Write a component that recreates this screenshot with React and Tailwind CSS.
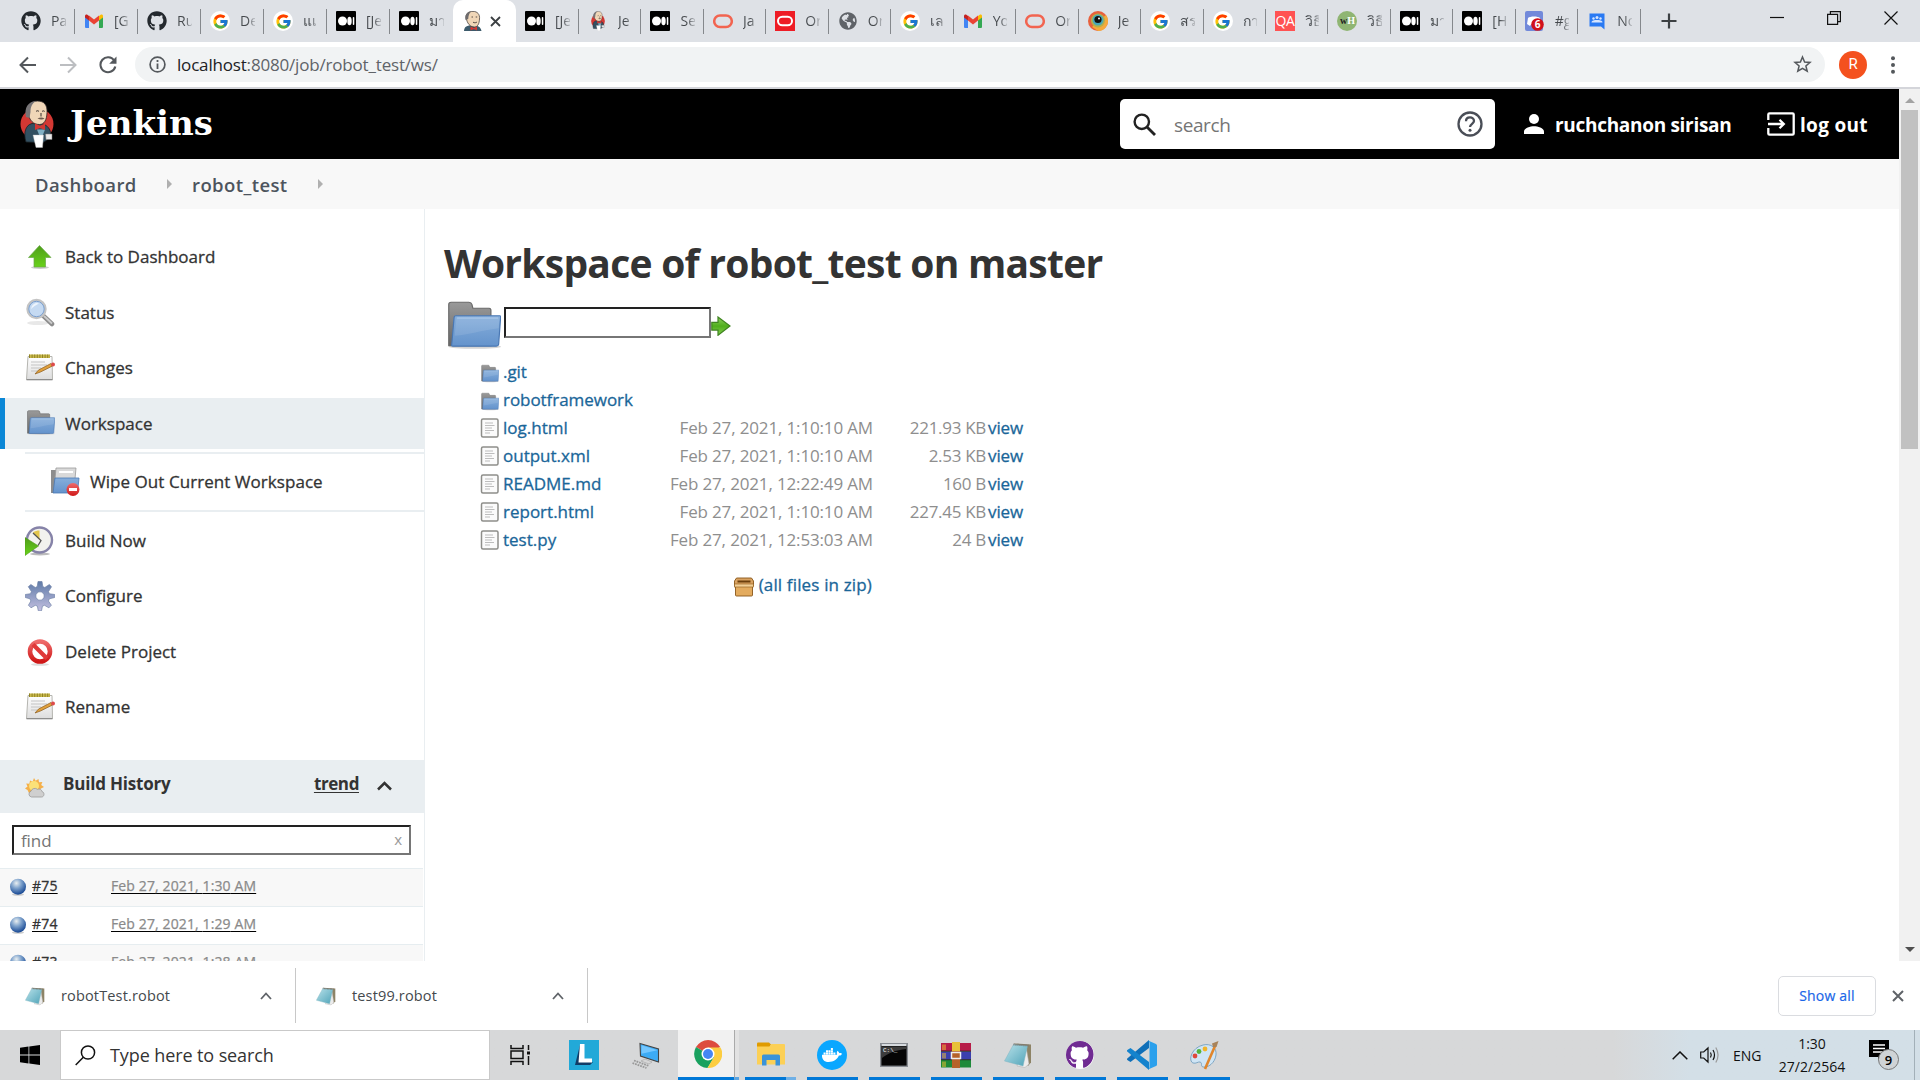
import React from 'react';
import { FaGithub, FaDocker, FaGlobeAmericas } from 'react-icons/fa';
import { FcGoogle } from 'react-icons/fc';

/* ---------- favicons ---------- */
const Github = () => <FaGithub className="size-5 text-[#24292e]" />;
const Google = () => (
  <span className="flex size-5 items-center justify-center rounded-full bg-white"><FcGoogle className="size-[17px]" /></span>
);
const Gmail = () => (
  <svg className="size-5" viewBox="0 0 20 20">
    <path d="M1 4.500V16a1 1 0 0 0 1 1h3V9z" fill="#4285f4" />
    <path d="M19 4.500V16a1 1 0 0 1-1 1h-3V9z" fill="#34a853" />
    <path d="M15 5l1.700-1.300C17.800 3 19 3.700 19 5v1.600L15 9.500z" fill="#fbbc04" />
    <path d="M5 9.500V4.500l5 3.900 5-3.900v5L10 13.400z" fill="#ea4335" />
    <path d="M1 6.600V5c0-1.300 1.300-2 2.400-1.300L5 5v4.500z" fill="#c5221f" />
  </svg>
);
const Medium = () => (
  <svg className="size-5" viewBox="0 0 20 20">
    <rect width="20" height="20" rx="1" fill="#000" />
    <circle cx="6.500" cy="10" r="4.500" fill="#fff" />
    <ellipse cx="13.500" cy="10" rx="2.200" ry="4.300" fill="#fff" />
    <rect x="16.800" y="6" width="1.500" height="8" rx=".7" fill="#fff" />
  </svg>
);
const Oracle = () => (
  <svg className="size-5" viewBox="0 0 20 20"><rect x="1.200" y="4.500" width="17.600" height="11.600" rx="5.800" fill="none" stroke="#f26450" strokeWidth="2.500" /></svg>
);
const OracleRed = () => (
  <svg className="size-5" viewBox="0 0 20 20"><rect width="20" height="20" fill="#ee1c25" /><rect x="3" y="5.700" width="14" height="8.600" rx="4.300" fill="none" stroke="#fff" strokeWidth="2" /></svg>
);
const Globe = () => <FaGlobeAmericas className="size-[18px] text-[#5f6368]" />;
const Eye = () => (
  <svg className="size-5" viewBox="0 0 20 20">
    <circle cx="10" cy="10" r="10" fill="#e8603c" /><path d="M10 20a10 10 0 0 0 8-16L4 16z" fill="#f6a93b" />
    <circle cx="10" cy="9.500" r="7" fill="#b5b04a" /><circle cx="10" cy="9" r="5.500" fill="#4aa8b8" />
    <circle cx="10" cy="8.500" r="3.600" fill="#111" /><circle cx="11" cy="7.500" r="1" fill="#fff" />
  </svg>
);
const QA = () => (
  <span className="flex size-5 items-center justify-center bg-[#ff5252] text-[14px] leading-none tracking-[-0.5px] text-white">QA</span>
);
const WH = () => (
  <span className="flex size-5 items-center justify-center rounded-full bg-[#8fb573] font-['Liberation_Serif',serif] text-[10px] font-bold leading-none text-[#222]">w<span className="text-white">H</span></span>
);
const Discord = () => (
  <svg className="size-5 overflow-visible" viewBox="0 0 20 20">
    <rect width="18" height="20" rx="2" fill="#7289da" />
    <path d="M3 7c2-2 10-2 12 0l1 6-3 2-1-1.500H6L5 15l-3-2z" fill="#fff" />
    <circle cx="12.500" cy="13.500" r="6.300" fill="#d1101a" />
    <text x="12.500" y="17" fontSize="10" fontWeight="700" fill="#fff" textAnchor="middle" fontFamily="Open Sans, sans-serif">6</text>
  </svg>
);
const Groups = () => (
  <svg className="size-5" viewBox="0 0 20 20">
    <path d="M2.500 2.500h15v16l-3.500-3H2.500z" fill="#2a7af3" />
    <g fill="#d6e5ff"><circle cx="10" cy="6.500" r="1.500" /><circle cx="6.500" cy="7.500" r="1.200" /><circle cx="13.500" cy="7.500" r="1.200" /><path d="M4.500 11.500c0-2 3-2.500 5.500-2.500s5.500.5 5.500 2.500z" /></g>
  </svg>
);

function JenkinsHead({ className }) {
  return (
    <svg className={className} viewBox="0 0 18 20">
      <path d="M0 20c0-3 1.500-5 5-5.500h7c3 .5 5 2.500 5.500 5.500z" fill="#3c5a6b" />
      <path d="M2 6C2 2 5 .4 9 .4c4.500 0 7 3 6.500 7.600-.2 5-2 8-5 8C6 16 3 12.500 2 6z" fill="#f0d6b7" stroke="#332c2a" strokeWidth=".7" />
      <path d="M1.500 9C.5 4 3 .7 7.500.4 5 2 4.500 4 4.200 8z" fill="#6d6b6d" />
      <path d="M7.500 6h1.500M11.700 6h1.500M9 11.200c1.500.9 3 .6 4-.2" stroke="#332c2a" strokeWidth=".8" fill="none" />
      <path d="M6.500 15.500l3.200 1.500 3.300-1.500v4l-3.300-1.500-3.200 1.500z" fill="#d33833" />
    </svg>
  );
}

function Butler({ className }) {
  return (
    <svg className={className} viewBox="0 0 34 48">
      <ellipse cx="17" cy="24" rx="16.500" ry="16" fill="#d33833" />
      <path d="M6 42C3 32 6 25 12 23.500l12 1c5 2 7 6 7 13l-8 5z" fill="#335061" stroke="#1b2226" strokeWidth=".8" />
      <path d="M7.500 12C7 4.500 11 1 17.500 1c7 0 10 4.500 9.500 11.500-.2 7-2.500 12-7.500 12-6 0-10-3.500-12-12.500z" fill="#f0d6b7" stroke="#2b2525" strokeWidth=".8" />
      <path d="M6 17C4 8 8 1.500 16 1c-4 2.500-5.500 6-5.500 11L9.500 18z" fill="#777476" />
      <path d="M16 11.500c1-1 2-1 3 0M22 11.500c1-.8 2-.8 2.700 0M21 13v3.500" stroke="#332c2a" strokeWidth="1" fill="none" />
      <path d="M17.500 18.500c2.500-1.500 5-1.500 7 0-1.600 1.200-4 1.500-7 0z" fill="#6d5a50" />
      <path d="M17 29.500h8l-2.500 6.500h-3z" fill="#81b0c4" />
      <path d="M15 23.500l5 2.300 5-2.300v6.500l-5-2-5 2z" fill="#d33833" />
      <path d="M13 35h10.500l-1 12.500h-6.500z" fill="#fff" stroke="#bbb" strokeWidth=".4" />
      <path d="M25.500 34h6.500v5.500h-6z" fill="#e8e8e8" stroke="#777" strokeWidth=".5" />
    </svg>
  );
}

/* ---------- page icons ---------- */
function Defs() {
  return (
    <svg className="absolute size-0">
      <defs>
        <linearGradient id="gBlue" x2="0" y2="1"><stop stopColor="#86aedb" /><stop offset="1" stopColor="#6493cc" /></linearGradient>
        <linearGradient id="gGray" x2="0" y2="1"><stop stopColor="#9a9a9a" /><stop offset="1" stopColor="#666" /></linearGradient>
        <linearGradient id="gGreen" x2="0" y2="1"><stop stopColor="#4f9d1b" /><stop offset="1" stopColor="#68d21a" /></linearGradient>
        <linearGradient id="gGo" x2="0" y2="1"><stop stopColor="#8fd05f" /><stop offset=".5" stopColor="#4fae1c" /><stop offset="1" stopColor="#86cf50" /></linearGradient>
        <linearGradient id="gPaper" x2="0" y2="1"><stop stopColor="#fff" /><stop offset="1" stopColor="#ddd" /></linearGradient>
        <linearGradient id="gRed" x2="0" y2="1"><stop stopColor="#ee6b6b" /><stop offset="1" stopColor="#d01818" /></linearGradient>
        <linearGradient id="gGear" x2="0" y2="1"><stop stopColor="#5f7ba8" /><stop offset="1" stopColor="#c3bfe0" /></linearGradient>
        <linearGradient id="gPad" x1="0" x2="1" y2="1"><stop stopColor="#b9e2ea" /><stop offset="1" stopColor="#4fa3b8" /></linearGradient>
        <radialGradient id="gBall" cx=".4" cy=".28" r=".7"><stop stopColor="#e8eef0" /><stop offset=".45" stopColor="#7ea2cc" /><stop offset="1" stopColor="#1c4c96" /></radialGradient>
      </defs>
    </svg>
  );
}
const UpArrow = () => (
  <svg className="-mt-[2px] size-[30px]" viewBox="0 0 30 30">
    <ellipse cx="15" cy="26.500" rx="9" ry="1.500" fill="#ccc" />
    <path d="M14.500 4.500L26 16.500h-5.500v9.500H9v-9.500H3.500z" fill="url(#gGreen)" stroke="#6aa84a" strokeWidth=".7" />
  </svg>
);
const Magnifier = () => (
  <svg className="size-[30px]" viewBox="0 0 30 30">
    <ellipse cx="13" cy="25" rx="11" ry="2" fill="#e8e8e8" />
    <path d="M18 17.500l9 8.500" stroke="#8c8c8c" strokeWidth="4.500" strokeLinecap="round" /><path d="M19 18l8 7.500" stroke="#ccc" strokeWidth="1.800" />
    <circle cx="11.500" cy="11" r="9" fill="#c5daf2" stroke="#c4c4c4" strokeWidth="2.400" /><circle cx="11.500" cy="11" r="7.700" fill="none" stroke="#7ba0d0" />
    <path d="M6 11a6 6 0 0 1 8-5.500C11 7 8 9 6 11z" fill="#eef5fd" />
  </svg>
);
const Notepad = () => (
  <svg className="size-[30px]" viewBox="0 0 30 30">
    <path d="M3 3.500h24l.5 23H1.500z" fill="url(#gPaper)" stroke="#b5b5b0" />
    <path d="M1.500 26.700h26" stroke="#888" strokeWidth="1.200" />
    <path d="M4 1.500h21v3.500H4z" fill="#c9b94c" /><path d="M4 3.200h21" stroke="#8f8226" strokeWidth="3.500" strokeDasharray="1 1.600" />
    <path d="M6 9h14M6 12h16M6 15h10M6 18h6" stroke="#c4c4c4" strokeWidth="1.200" />
    <path d="M10 21l3.500-4L26 10.500l1.500 2.500-12 6z" fill="#e0a03c" stroke="#8a5a1c" strokeWidth=".7" /><circle cx="28" cy="11.500" r="2" fill="#dd4b4b" />
  </svg>
);
function Folder({ className }) {
  return (
    <svg className={className} viewBox="0 0 48 48" preserveAspectRatio="none">
      <ellipse cx="26" cy="44" rx="22" ry="2" fill="#d4d4d4" />
      <path d="M4 43V5q0-2 2-2h15q2 0 2.500 2l.8 3.500H38q1.500 0 1.500 2V43z" fill="url(#gGray)" stroke="#6a6a6a" />
      <path d="M10 15.500h37q.8 0 .7 1L46 42q-.2 1.500-2 1.500H7.500q-1.500 0-1-1.500L8.500 17q.2-1.500 1.500-1.500z" fill="url(#gBlue)" stroke="#4a78b4" />
      <path d="M11 17.500h34.500" stroke="#a9c7ea" strokeWidth="1" fill="none" /><path d="M9 34c12-1 22-5 37-7l.8-10H10.500z" fill="#fff" opacity=".1" />
    </svg>
  );
}
const WipeFolder = () => (
  <svg className="size-[30px]" viewBox="0 0 30 30">
    <path d="M1 26V3h6l1 2h17v21z" fill="#8d8d8d" /><path d="M6 1h20l-1 11H5z" fill="#d9d9d9" stroke="#999" strokeWidth=".8" /><path d="M9 5h14" stroke="#fff" strokeWidth="2" />
    <path d="M5 11h24l-1.500 15H3z" fill="url(#gBlue)" stroke="#4a78b4" strokeWidth=".8" />
    <circle cx="23" cy="22.500" r="6.500" fill="url(#gRed)" /><rect x="19" y="21" width="8" height="3" fill="#fff" />
  </svg>
);
const BuildNow = () => (
  <svg className="size-[30px]" viewBox="0 0 30 30">
    <ellipse cx="15" cy="28" rx="10" ry="1.500" fill="#bbb" />
    <circle cx="14.500" cy="14" r="12.500" fill="#f2f2ee" stroke="#8683a8" strokeWidth="2.400" />
    <path d="M14.500 14L8 6.500c2-1.500 4-2 6.500-2z" fill="#e3c64c" /><path d="M8 7l8 7.500-3 5" stroke="#555" strokeWidth="1.300" fill="none" />
    <path d="M0 11.500L13.500 20 0 29.500z" fill="url(#gGreen)" stroke="#4d9a1a" strokeWidth=".6" />
  </svg>
);
const Gear = () => (
  <svg className="size-[30px]" viewBox="0 0 30 30">
    <path fill="url(#gGear)" stroke="#7083a8" strokeWidth=".7" fillRule="evenodd" d="M13 .5h4l.8 5.100 2 .9 4.500-3 2.200 2.200-3 4.800.8 2.200 5.400.8v3l-5.400 1.300-.9 2.200 3 4.200-2.500 2.600-4.400-2.500-2.100.9-.9 4.600h-3.200l-.9-4.600-2.100-.9-4.300 2.500-2.600-2.600 2.500-4.200-.9-2.200L.3 16.500v-3l5.200-.8.9-2.200-3.100-4.800 2.600-2.200 4.400 3 1.900-.9zM15 10.800a4.200 4.200 0 1 0 0 8.400 4.200 4.200 0 0 0 0-8.400z" />
  </svg>
);
const NoEntry = () => (
  <svg className="size-[30px]" viewBox="0 0 30 30">
    <ellipse cx="15" cy="27.500" rx="9" ry="1.300" fill="#ddd" />
    <circle cx="15" cy="14.500" r="10" fill="#fff" stroke="url(#gRed)" strokeWidth="4.600" /><path d="M8 7.500l14 14" stroke="#e03a3a" strokeWidth="4.200" />
  </svg>
);
const Weather = () => (
  <svg className="size-5" viewBox="0 0 20 20">
    <path d="M9 0l1.600 2.800L13.500 1l.5 3.200 3.400-.2-1.200 3L19 9l-3 1.500L12 15H4L2.500 12 0 10.500 2.500 8.500 1.200 5.500l3.200.2L5 2.500l2.600 1.200z" fill="#f5b04a" />
    <circle cx="9" cy="8" r="5" fill="#fbe178" />
    <path d="M6.500 19a3 3 0 0 1-.5-5.800 4 4 0 0 1 6.500-1.800 3 3 0 0 1 4.500 2.200c2.800.5 2.600 5.400-.5 5.400z" fill="#cfcfcf" stroke="#9a9a9a" strokeWidth=".8" />
  </svg>
);
const FileIcon = () => (
  <svg className="size-5 shrink-0" viewBox="0 0 20 20">
    <rect x="1.500" y="1" width="16.500" height="18" rx="1.500" fill="#fbfbfb" stroke="#8e8e8a" strokeWidth="1.500" />
    <path d="M5 5h8M5 7.500h9.500M5 10h7M5 12.500h9M5 15h5" stroke="#bdbdbd" />
  </svg>
);
const ZipIcon = () => (
  <svg className="size-5" viewBox="0 0 20 20">
    <path d="M2.500 1h15l2 3v5H.5V4z" fill="#d9a261" stroke="#8a5718" strokeWidth=".9" /><rect x="1.500" y="9" width="17" height="10" rx="1" fill="#e3ab5e" stroke="#8a5718" strokeWidth=".9" />
    <rect x="3.500" y="3.500" width="13" height="2" fill="#6b3f0c" /><rect x=".5" y="7" width="19" height="3" fill="#f3cf95" stroke="#8a5718" strokeWidth=".6" />
  </svg>
);
const Ball = () => (
  <svg className="size-5" viewBox="0 0 20 20"><ellipse cx="10" cy="17.500" rx="6" ry="1.300" fill="#ccc" /><circle cx="10" cy="9.700" r="8" fill="url(#gBall)" /></svg>
);
function NotepadFile({ className }) {
  return (
    <svg className={className} viewBox="0 0 28 26">
      <path d="M10 1.500l17 1v18l-3 3.500z" fill="#8d8366" />
      <path d="M22 4l3 18-4 3.500L13 24z" fill="#ececec" stroke="#aaa" strokeWidth=".5" />
      <path d="M9.500 2.500L23.500 4l-4.500 20L.5 19z" fill="url(#gPad)" stroke="#7fb5c2" strokeWidth=".5" />
      <path d="M9.500 2.500l15 1" stroke="#777" strokeWidth="2" strokeDasharray="1 1" />
    </svg>
  );
}

/* ---------- browser chrome ---------- */
const JenkinsTab = () => <Butler className="h-5 w-4" />;
const tabs = [
  [Github, 'Pa'], [Gmail, '[G'], [Github, 'Ru'], [Google, 'De'], [Google, 'แเ'], [Medium, '[Je'], [Medium, 'มา'], null,
  [Medium, '[Je'], [JenkinsTab, 'Je'], [Medium, 'Se'], [Oracle, 'Ja'], [OracleRed, 'Or'], [Globe, 'Or'], [Google, 'เล'], [Gmail, 'Yo'],
  [Oracle, 'Or'], [Eye, 'Je'], [Google, 'สร'], [Google, 'กา'], [QA, 'วิธี'], [WH, 'วิธี'], [Medium, 'มา'], [Medium, '[H'], [Discord, '#g'], [Groups, 'No'],
];

function TabStrip() {
  return (
    <div className="flex h-[42px] shrink-0 bg-[#dee1e6] pl-3">
      {tabs.map((t, i) => {
        if (!t) {
          return (
            <div key={i} className="flex h-[42px] w-[63px] items-center gap-2 rounded-t-[10px] bg-white pl-[11px]">
              <JenkinsHead className="h-5 w-[18px]" />
              <svg className="size-[11px]" viewBox="0 0 11 11"><path d="M1 1l9 9M10 1l-9 9" stroke="#3c4043" strokeWidth="1.800" /></svg>
            </div>
          );
        }
        const Icon = t[0];
        return (
          <div key={i} className={`flex shrink-0 items-center ${i < 9 ? 'w-[63px]' : 'w-[62.46px]'}`}>
            <span className="ml-[9px] flex w-5 shrink-0 justify-center"><Icon /></span>
            <span className="ml-[10px] w-[14.5px] overflow-hidden whitespace-nowrap bg-linear-to-r from-[#45494d] from-50% to-[#45494d]/20 bg-clip-text text-[14px] leading-6 text-transparent">{t[1]}</span>
            <span className={`ml-auto h-[25px] w-px ${i === 6 ? 'bg-transparent' : 'bg-[#85888c]'}`} />
          </div>
        );
      })}
      <svg className="ml-5 mt-[13px] size-4" viewBox="0 0 16 16"><path d="M8 .5v15M.5 8h15" stroke="#3c4043" strokeWidth="2.200" /></svg>
      <div className="ml-auto flex gap-[43px] pr-[22px] pt-[11px]">
        <svg className="size-[14px]" viewBox="0 0 14 14"><path d="M0 6.500h14" stroke="#111" strokeWidth="1.200" /></svg>
        <svg className="size-[14px]" viewBox="0 0 14 14"><path d="M.6 3.400h10v10H.6zM3.400 3V.6h10v10H11" fill="none" stroke="#111" strokeWidth="1.200" /></svg>
        <svg className="size-[14px]" viewBox="0 0 14 14"><path d="M.5.5l13 13M13.500.5l-13 13" stroke="#111" strokeWidth="1.200" /></svg>
      </div>
    </div>
  );
}

function Toolbar() {
  return (
    <div className="flex h-[47px] shrink-0 items-center border-b-2 border-[#d4d5da] bg-white">
      <svg className="ml-[19px] size-[18px]" viewBox="0 0 18 18"><path d="M17 9H2M9 1.500L1.500 9 9 16.500" fill="none" stroke="#54585c" strokeWidth="2" /></svg>
      <svg className="ml-[22px] size-[18px]" viewBox="0 0 18 18"><path d="M1 9h15M9 1.500L16.500 9 9 16.500" fill="none" stroke="#bcbec1" strokeWidth="2" /></svg>
      <svg className="ml-[22px] size-[18px]" viewBox="0 0 18 18"><path d="M15.200 4.500A7.500 7.500 0 1 0 16.300 10.500" fill="none" stroke="#54585c" strokeWidth="2.100" /><path d="M17.500.5v7.300h-7.300z" fill="#54585c" /></svg>
      <div className="ml-[18px] flex h-[35px] w-[1690px] items-center rounded-full bg-[#f1f3f4] pl-[14px] pr-[13px]">
        <svg className="size-[17px]" viewBox="0 0 17 17"><circle cx="8.500" cy="8.500" r="7.400" fill="none" stroke="#54585c" strokeWidth="1.700" /><path d="M8.500 4v2M8.500 7.500V13" stroke="#54585c" strokeWidth="1.800" /></svg>
        <span className="ml-[11px] text-[17px] tracking-[-0.18px] text-[#5f6368]"><span className="text-[#202124]">localhost</span>:8080/job/robot_test/ws/</span>
        <svg className="ml-auto size-[19px]" viewBox="0 0 19 19"><path d="M9.500 2l2.100 5 5.400.4-4.100 3.500 1.300 5.300-4.700-2.900-4.700 2.900 1.300-5.300L2 7.400 7.400 7z" fill="none" stroke="#54585c" strokeWidth="1.500" /></svg>
      </div>
      <span className="ml-[14px] flex size-7 items-center justify-center rounded-full bg-[#f4511e] font-['Roboto',sans-serif] text-[15px] text-white">R</span>
      <svg className="ml-6 h-[18px] w-1" viewBox="0 0 4 18"><g fill="#54585c"><circle cx="2" cy="2.300" r="2" /><circle cx="2" cy="9" r="2" /><circle cx="2" cy="15.700" r="2" /></g></svg>
    </div>
  );
}

/* ---------- Jenkins ---------- */
function Header() {
  return (
    <div className="flex h-[70px] shrink-0 items-center bg-black text-[19px] font-bold text-white">
      <Butler className="ml-5 h-[48px] w-[34px] shrink-0" />
      <span className="ml-[16px] -mt-[3px] w-[146px] font-['DejaVu_Serif',serif] text-[34px] font-bold leading-[50px]">Jenkins</span>
      <div className="ml-auto flex h-[50px] w-[375px] shrink-0 items-center rounded-[5px] bg-white pl-[13px] pr-3">
        <svg className="size-[23px]" viewBox="0 0 23 23"><circle cx="8.800" cy="8.800" r="7.200" fill="none" stroke="#222" strokeWidth="2.400" /><path d="M14 14l8 8" stroke="#222" strokeWidth="2.800" /></svg>
        <span className="ml-[18px] mt-[3px] text-[19px] font-normal tracking-[-0.4px] text-[#757575]">search</span>
        <svg className="ml-auto size-[26px]" viewBox="0 0 26 26"><circle cx="13" cy="13" r="11.500" fill="none" stroke="#4a4e57" strokeWidth="2.300" /><path d="M9 10.300c0-5.200 8-5 8-.2 0 2.700-4 3-4 6" fill="none" stroke="#4a4e57" strokeWidth="2.300" /><circle cx="13" cy="19.200" r="1.500" fill="#4a4e57" /></svg>
      </div>
      <svg className="ml-[29px] size-5 shrink-0" viewBox="0 0 20 20"><circle cx="10" cy="5" r="5" fill="#fff" /><path d="M0 20v-2.500c0-3.500 6.500-5.300 10-5.300s10 1.800 10 5.300V20z" fill="#fff" /></svg>
      <span className="ml-[11px] mt-[2px] w-[176px] shrink-0 whitespace-nowrap tracking-[-0.3px]">ruchchanon sirisan</span>
      <svg className="ml-[36px] h-6 w-7 shrink-0" viewBox="0 0 28 24"><path d="M1.300 8V2.500q0-1.200 1.200-1.200h23q1.200 0 1.200 1.200v19q0 1.200-1.200 1.200h-23q-1.200 0-1.200-1.200V16M1 12h15M12.500 7.800l4.300 4.200-4.300 4.200" fill="none" stroke="#fff" strokeWidth="2.300" /></svg>
      <span className="ml-[5px] mt-[2px] w-[99px] shrink-0 whitespace-nowrap tracking-[0.3px]">log out</span>
    </div>
  );
}

const Crumb = () => <span className="border-y-[5px] border-l-[5px] border-y-transparent border-l-[#b0b0b0]" />;

function Side({ icon: Icon, label, active }) {
  return (
    <div className={`mb-[4.5px] flex h-[51px] items-center gap-[10px] ${active ? 'border-l-[5px] border-[#0b87d6] bg-[#e9eef1] pl-5' : 'pl-[25px]'}`}>
      <Icon />
      <span className="text-[17px] tracking-[0px] text-[#333] [-webkit-text-stroke:0.3px]">{label}</span>
    </div>
  );
}
const SideFolder = () => <Folder className="-mt-[3px] h-[27px] w-[30px]" />;

function Sidebar() {
  return (
    <div className="h-full w-[425px] shrink-0 overflow-hidden border-r border-[#e9eef1]">
      <div className="pt-[22.5px]">
        <Side icon={UpArrow} label="Back to Dashboard" />
        <Side icon={Magnifier} label="Status" />
        <Side icon={Notepad} label="Changes" />
        <Side icon={SideFolder} label="Workspace" active />
      </div>
      <div className="-mt-[1.5px] mb-[3px] ml-[25px] flex h-[60px] items-center gap-[10px] border-y-2 border-[#e9eef1] pl-[25px]">
        <WipeFolder />
        <span className="text-[17px] tracking-[0.05px] text-[#333] [-webkit-text-stroke:0.3px]">Wipe Out Current Workspace</span>
      </div>
      <Side icon={BuildNow} label="Build Now" />
      <Side icon={Gear} label="Configure" />
      <Side icon={NoEntry} label="Delete Project" />
      <Side icon={Notepad} label="Rename" />
      <div className="mt-[27px] flex h-[53px] items-center bg-[#e9eef1] pl-[25px] text-[17px] font-bold text-[#333]">
        <span className="mt-[3px]"><Weather /></span>
        <span className="-mt-1 ml-[18px] tracking-[-0.2px]">Build History</span>
        <span className="-mt-1 ml-auto tracking-[-0.4px] underline underline-offset-2">trend</span>
        <svg className="ml-[18px] mr-[32px] h-[10px] w-[15px]" viewBox="0 0 15 10"><path d="M1 8.500l6.500-6.500L14 8.500" fill="none" stroke="#333" strokeWidth="2.500" /></svg>
      </div>
      <div className="mx-3 mt-3 flex h-[30px] w-[399px] items-center justify-between border-2 border-b-[#767676] border-l-[#222] border-r-[#767676] border-t-[#222] px-[7px]">
        <span className="mt-[3px] text-[17px] tracking-[-0.1px] text-[#757575]">find</span>
        <span className="text-[15px] text-[#999]">x</span>
      </div>
      <div className="mt-[13px]">
        {[['#75', '1:30'], ['#74', '1:29'], ['#73', '1:28']].map(([n, t], i) => (
          <div key={n} className={`flex h-[38px] w-[423px] items-center border-t border-[#e6edf0] pl-2 text-[14px] underline underline-offset-2 ${i % 2 ? 'bg-white' : 'bg-[#f8f8f8]'}`}>
            <Ball />
            <span className="-mt-1 ml-1 w-[79px] tracking-[0.2px] text-[#333] [-webkit-text-stroke:0.3px]">{n}</span>
            <span className="-mt-1 tracking-[0.12px] text-[#8a8a8a] [-webkit-text-stroke:0.25px]">Feb 27, 2021, {t} AM</span>
          </div>
        ))}
      </div>
    </div>
  );
}

const files = [
  ['log.html', 'Feb 27, 2021, 1:10:10 AM', '221.93 KB'],
  ['output.xml', 'Feb 27, 2021, 1:10:10 AM', '2.53 KB'],
  ['README.md', 'Feb 27, 2021, 12:22:49 AM', '160 B'],
  ['report.html', 'Feb 27, 2021, 1:10:10 AM', '227.45 KB'],
  ['test.py', 'Feb 27, 2021, 12:53:03 AM', '24 B'],
];

function Main() {
  return (
    <div className="pl-[19px]">
      <h1 className="mt-[27px] h-[54px] whitespace-nowrap text-[39px] font-bold leading-[54px] tracking-[-0.74px] text-[#333]">Workspace of robot_test on master</h1>
      <div className="mt-[8px] flex h-[60px]">
        <Folder className="mt-px h-[52px] w-[57px]" />
        <div className="ml-[3px] mt-[9px] h-[31px] w-[207px] border-2 border-b-[#767676] border-l-[#222] border-r-[#767676] border-t-[#222]" />
        <svg className="mt-[18px] size-5" viewBox="0 0 20 20"><path d="M.8 6.300H7V1l12 9L7 19.300v-5.200H.8z" fill="url(#gGo)" stroke="#3f8420" strokeWidth="1.200" /></svg>
      </div>
      <div className="pl-[36px] text-[17px]">
        {['.git', 'robotframework'].map((d) => (
          <div key={d} className="flex h-7 items-center gap-1">
            <Folder className="mt-[2px] size-[19px]" />
            <span className="tracking-[-0.05px] text-[#1a6699] [-webkit-text-stroke:0.3px]">{d}</span>
          </div>
        ))}
        {files.map(([n, d, s]) => (
          <div key={n} className="flex h-7 w-[561px] items-center whitespace-nowrap">
            <FileIcon />
            <span className="ml-[3px] text-[#1a6699] [-webkit-text-stroke:0.3px]">{n}</span>
            <span className="ml-auto tracking-[-0.15px] text-[#8e8e8e]">{d}</span>
            <span className="w-[113px] text-right tracking-[-0.3px] text-[#8e8e8e]">{s}</span>
            <span className="ml-[2px] w-[53px] tracking-[-0.1px] text-[#1a6699] [-webkit-text-stroke:0.3px]">view</span>
          </div>
        ))}
        <div className="mt-[17px] flex h-7 w-[392px] items-center justify-end gap-[5px]">
          <span className="mt-1"><ZipIcon /></span>
          <span className="tracking-[0.15px] text-[#1a6699] [-webkit-text-stroke:0.3px]">(all files in zip)</span>
        </div>
      </div>
    </div>
  );
}

function Download({ name, className }) {
  return (
    <div className={`flex h-[55px] items-center border-r border-[#c8c8c8] ${className}`}>
      <NotepadFile className="h-5 w-5" />
      <span className="ml-4 mt-px text-[14.5px] tracking-[0.15px] text-[#45494d]">{name}</span>
      <svg className="ml-auto mr-[23px] h-2 w-3" viewBox="0 0 12 8"><path d="M1 7l5-5.500L11 7" fill="none" stroke="#5f6368" strokeWidth="1.800" /></svg>
    </div>
  );
}

/* ---------- taskbar ---------- */
const TaskL = () => (
  <svg className="size-[30px]" viewBox="0 0 30 30"><rect width="30" height="30" fill="#22a9d8" /><path d="M11 5L6 25h15l3-3H11z" fill="#123c66" /><path d="M11 4h4.500v14.500H23V22.500H9.500z" fill="#fff" /></svg>
);
const Computer = () => (
  <svg className="size-[30px]" viewBox="0 0 30 30"><path d="M9 3.500l18.500 5.500v13l-18-6z" fill="#3cabf5" stroke="#444" strokeWidth="1.100" /><path d="M10.500 5.300l16 5-16 3.500z" fill="#74c7ff" /><path d="M14 19l7 3-3 2-8-3z" fill="#d6d6d6" stroke="#999" strokeWidth=".5" /><path d="M3 20.500l15 5.500M1.500 23l14 5" stroke="#999" strokeWidth="1.800" strokeDasharray="1.800 .9" /></svg>
);
const ChromeLogo = () => (
  <svg className="size-7" viewBox="0 0 28 28"><path d="M14 14L2 7a14 14 0 0 1 24.200 0z" fill="#dd4b3e" /><path d="M14 14L2 7a14 14 0 0 0 11.500 21L20 17.500z" fill="#19a15f" /><path d="M14 7.500h12.500A14 14 0 0 1 13.500 28l6.500-11z" fill="#fccd40" /><circle cx="14" cy="14" r="6.500" fill="#fff" /><circle cx="14" cy="14" r="5" fill="#4586f4" /></svg>
);
const Explorer = () => (
  <svg className="mr-px size-7" viewBox="0 0 28 28"><path d="M0 3.500q0-1 1-1h11l2 2L12 8H0z" fill="#e09b00" /><path d="M0 6.500h12.500l2-2.500H27q1 0 1 1v19.500H0z" fill="#fcd056" /><path d="M5 25.500V16q0-1.500 1.500-1.500h15q1.500 0 1.500 1.500v9.500h-4.500v-5.500h-9v5.500z" fill="#3b93d9" /></svg>
);
const Docker = () => <span className="flex size-[30px] items-center justify-center rounded-full bg-[#0aa7ff]"><FaDocker className="size-5 text-white" /></span>;
const Cmd = () => (
  <svg className="h-6 w-7" viewBox="0 0 28 24"><rect x=".7" y=".7" width="26.600" height="22.600" fill="#050505" stroke="#888c92" strokeWidth="1.400" /><path d="M1.500 2h25" stroke="#d6dade" strokeWidth="2" /><path d="M2 15C8 10 16 7 26 6V3.500H2z" fill="#3c3c3c" /><text x="3" y="9" fontSize="6" fill="#fff" fontFamily="Liberation Mono, monospace">C:\_</text></svg>
);
const WinRar = () => (
  <svg className="h-[26px] w-[30px]" viewBox="0 0 30 26"><rect y="1" width="30" height="8" fill="#b71c48" /><rect y="9.500" width="30" height="8" fill="#3b3fae" /><rect y="18" width="30" height="7.500" fill="#1d8a3a" /><path d="M2 2.500v5.500M4 2.500v5.500M2 11v5.500M4 11v5.500M2 19.500V25M4 19.500V25" stroke="#f2c230" /><path d="M0 9.200h30M0 17.700h30" stroke="#222" /><rect x="11" width="8" height="26" fill="#b5622a" /><rect x="11" width="8" height="9" fill="#e8c23a" /><rect x="10.500" y="10.500" width="9" height="6" fill="none" stroke="#eee" strokeWidth="1.500" /></svg>
);
const TaskPad = () => <NotepadFile className="h-[26px] w-7" />;
const TaskGit = () => <span className="flex size-7 items-center justify-center overflow-hidden rounded-full bg-white"><FaGithub className="size-[29px] shrink-0 text-[#702b92]" /></span>;
const VsCode = () => (
  <svg className="size-[30px]" viewBox="0 0 30 30"><path d="M22 0v8L3.500 22 .3 20q-.7-1 .2-1.800z" fill="#0f6fb8" /><path d="M22 30v-8L3.500 8 .3 10q-.7 1 .2 1.800z" fill="#1483cd" /><path d="M21 .5L29 4q1 .5 1 1.500v19q0 1-1 1.500l-8 3.500q1.500-1 1.500-2.500V3q0-1.500-1.500-2.500z" fill="#2ba0ec" /></svg>
);
const Paint = () => (
  <svg className="size-[30px]" viewBox="0 0 30 30"><path d="M14 5c8-2 14 3 13 10-1 8-8 13-13 12-3-1 0-4-3-5-2-.5-4 2-7 1-5-2-2-15 10-18z" fill="#cfe5f5" stroke="#7ea6c4" /><circle cx="6" cy="16" r="2.400" fill="#e0483c" /><circle cx="10" cy="11.500" r="2.400" fill="#54b33c" /><circle cx="16" cy="9" r="2.400" fill="#f1b52a" /><path d="M16 29L26 6" stroke="#e0862c" strokeWidth="2.600" /><path d="M24 7l-1-3.500L29.500 1l-2 6z" fill="#a8835a" /></svg>
);
const running = [Docker, Cmd, WinRar, TaskPad, TaskGit, VsCode, Paint];

function Taskbar() {
  return (
    <div className="flex h-[50px] shrink-0 bg-linear-to-r from-[#d7d8d9] from-84% to-[#d3dfe7] to-88%">
      <div className="flex w-[60px] items-center justify-center">
        <svg className="size-5" viewBox="0 0 20 20"><path d="M0 2.700L8.500 1.500v8H0zM9.300 1.400L20 0v9.500H9.300zM0 10.400h8.500v8L0 17.300zM9.300 10.400H20V20L9.300 18.600z" fill="#000" /></svg>
      </div>
      <div className="flex w-[430px] items-center border border-[#c9c9c9] bg-white pl-[14px]">
        <svg className="size-[21px]" viewBox="0 0 21 21"><circle cx="13" cy="7.500" r="6.600" fill="none" stroke="#111" strokeWidth="1.500" /><path d="M8.300 12.300L.7 20" stroke="#111" strokeWidth="1.500" /></svg>
        <span className="ml-[14px] text-[18px] tracking-[-0.1px] text-[#333]">Type here to search</span>
      </div>
      <div className="flex w-[188px] items-center pl-5">
        <svg className="h-[20px] w-[21px] shrink-0" viewBox="0 0 21 20"><path d="M1 0v3.500h12V0M1 20v-3.500h12V20M1 6h12v7.500H1zM18.500 0v5M18.500 11v9" fill="none" stroke="#111" strokeWidth="1.500" /><rect x="17" y="6.500" width="3" height="3" fill="#111" /></svg>
        <span className="ml-[38px]"><TaskL /></span>
        <span className="ml-[32px]"><Computer /></span>
      </div>
      <div className="flex w-[56px] items-center justify-center border-b-[3px] border-[#0078d7] bg-[#f1f1f1] pl-[3px]"><ChromeLogo /></div>
      <div className="w-[5px] border-b-[3px] border-l border-b-[#5aa5e2] border-l-[#aaa] bg-[#e2e2e2]" />
      <div className="ml-[6px] flex w-[51px]">
        <div className="flex w-[41px] items-center justify-end border-b-[3px] border-[#0078d7]"><Explorer /></div>
        <div className="w-[10px] border-b-[3px] border-[#6fb0e6]" />
      </div>
      {running.map((Icon, i) => (
        <div key={i} className="ml-[11px] flex w-[51px] items-center justify-center border-b-[3px] border-[#0078d7] pr-[2px] pt-[2px]"><Icon /></div>
      ))}
      <div className="ml-auto flex items-center text-[#111]">
        <svg className="h-[9px] w-4" viewBox="0 0 16 9"><path d="M.7 8.300L8 1l7.300 7.300" fill="none" stroke="#111" strokeWidth="1.500" /></svg>
        <svg className="ml-3 h-[18px] w-5" viewBox="0 0 20 18"><path d="M.7 6h3L8 2v14l-4.300-4h-3zM10.500 6.500q1.500 2.500 0 5M13 4q3 5 0 10" fill="none" stroke="#111" strokeWidth="1.200" /><path d="M15.800 1.500q4.500 7.500 0 15" fill="none" stroke="#999" strokeWidth="1.200" /></svg>
        <span className="ml-[13px] w-[30px] text-[14px]">ENG</span>
        <span className="ml-[14px] flex w-[70px] flex-col items-center text-[14px] leading-[23px]"><span>1:30</span><span>27/2/2564</span></span>
        <svg className="ml-[22px] h-[30px] w-[31px]" viewBox="0 0 31 30"><path d="M0 0h20v17h-8l-3 3v-3H0z" fill="#000" /><path d="M4 5h12M4 8.500h12M4 12h12" stroke="#fff" strokeWidth="1.300" /><circle cx="19.500" cy="19.500" r="10" fill="#cfd3d6" stroke="#777" /><text x="19.500" y="24.500" fontSize="13" fontWeight="600" textAnchor="middle" fontFamily="Open Sans, sans-serif">9</text></svg>
        <span className="ml-[14px] h-[50px] w-[6px] border-l border-[#a3b0b8]" />
      </div>
    </div>
  );
}

export default function App() {
  return (
    <div className="flex h-[1080px] w-[1920px] flex-col overflow-hidden bg-white font-['Open_Sans','Noto_Sans',sans-serif]">
      <Defs />
      <TabStrip />
      <Toolbar />
      <div className="flex h-[872px] shrink-0">
        <div className="flex w-[1899px] flex-col overflow-hidden">
          <Header />
          <div className="flex h-[50px] shrink-0 items-center bg-[#f8f8f8] pl-[35px] text-[18.5px] font-semibold tracking-[0.4px] text-[#4d545d]">
            <span className="mt-[2px] w-[101px] whitespace-nowrap">Dashboard</span>
            <span className="ml-[31px] flex"><Crumb /></span>
            <span className="ml-5 mt-[2px] w-[96px] whitespace-nowrap">robot_test</span>
            <span className="ml-[30px] flex"><Crumb /></span>
          </div>
          <div className="flex min-h-0 grow">
            <Sidebar />
            <Main />
          </div>
        </div>
        <div className="flex w-[21px] flex-col items-center bg-[#f1f1f1]">
          <span className="mt-[9px] h-0 border-x-[5px] border-b-[5px] border-x-transparent border-b-[#a3a3a3]" />
          <span className="mt-[7px] h-[339px] w-[17px] bg-[#c1c1c1]" />
          <span className="mb-[9px] mt-auto h-0 border-x-[5px] border-t-[5px] border-x-transparent border-t-[#505050]" />
        </div>
      </div>
      <div className="flex h-[69px] shrink-0 items-center bg-white">
        <Download name="robotTest.robot" className="w-[296px] pl-[25px]" />
        <Download name="test99.robot" className="w-[292px] pl-[20px]" />
        <span className="ml-auto flex h-10 w-[98px] items-center justify-center rounded-[5px] border border-[#dadce0] text-[14px] tracking-[0.2px] text-[#1a66e8] [-webkit-text-stroke:0.2px]">Show all</span>
        <svg className="ml-4 mr-4 size-3" viewBox="0 0 12 12"><path d="M1 1l10 10M11 1L1 11" stroke="#5f6368" strokeWidth="2" /></svg>
      </div>
      <Taskbar />
    </div>
  );
}
